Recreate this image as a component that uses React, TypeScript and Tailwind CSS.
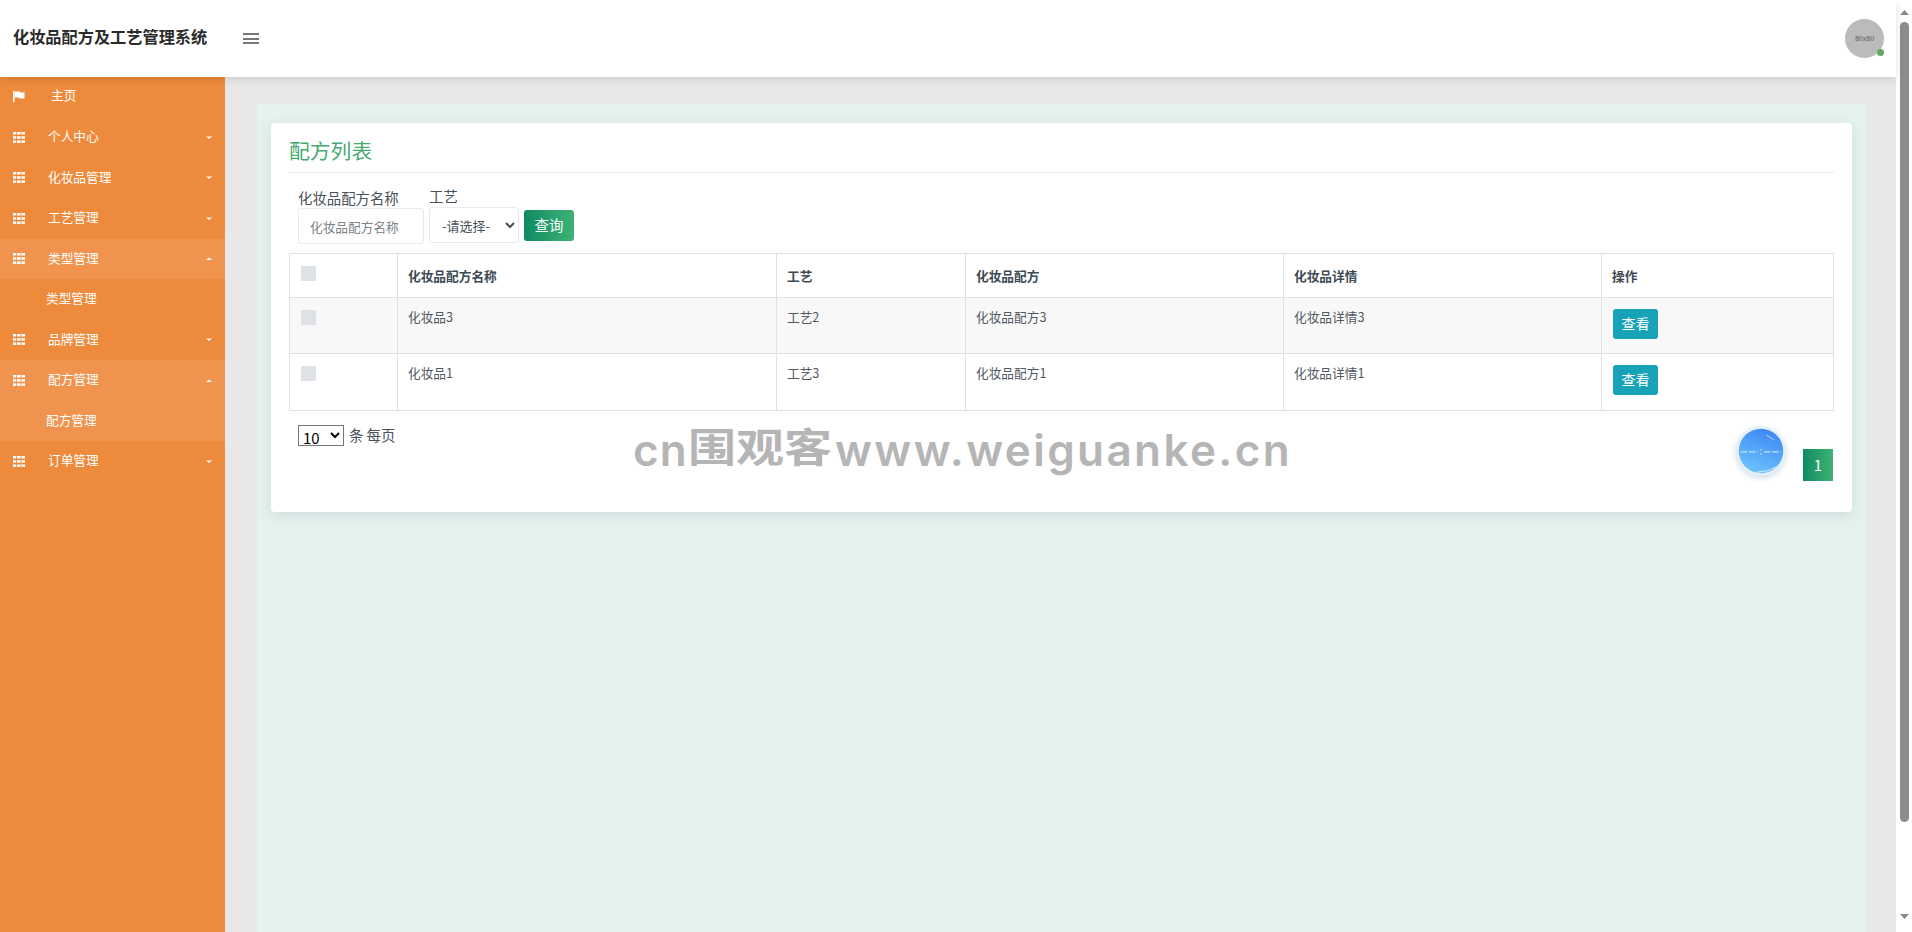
import { useState } from "react";

function GridIcon() {
  return (
    <svg width="12" height="11" viewBox="0 0 12 11" className="shrink-0" fill="#fff">
      {[0, 4.2, 8.4].map((y) => (
        <g key={y}>
          <rect x="0" y={y} width="3" height="2.5" />
          <rect x="3.8" y={y} width="3.8" height="2.5" />
          <rect x="8.4" y={y} width="3.6" height="2.5" />
        </g>
      ))}
    </svg>
  );
}

function FlagIcon() {
  return (
    <svg width="12" height="12" viewBox="0 0 12 12" className="shrink-0" fill="#fff">
      <rect x="0" y="0" width="1.6" height="11" />
      <path d="M1.6 0.5 H7 L7.6 1.6 H11.5 V7.4 H6.4 L5.8 6.4 H1.6 Z" />
    </svg>
  );
}

function Caret({ up }: { up?: boolean }) {
  return (
    <svg width="6" height="3" viewBox="0 0 6 3" fill="#fff" className="shrink-0">
      {up ? <path d="M0 3 L3 0.5 L6 3 Z" /> : <path d="M0 0.5 L6 0.5 L3 3 Z" />}
    </svg>
  );
}

type MenuItem = { label: string; sub?: string };

const menu: MenuItem[] = [
  { label: "个人中心" },
  { label: "化妆品管理" },
  { label: "工艺管理" },
  { label: "类型管理", sub: "类型管理" },
  { label: "品牌管理" },
  { label: "配方管理", sub: "配方管理" },
  { label: "订单管理" },
];

function Sidebar() {
  return (
    <aside className="w-[225px] shrink-0 bg-[#ed8a3b] text-[12.7px] text-white">
      <div className="flex h-[40px] items-center pl-[13px]">
        <FlagIcon />
        <span className="relative -top-[2px] ml-[26px]">主页</span>
      </div>
      {menu.map((item) => (
        <div key={item.label} className={item.label === "配方管理" ? "bg-[#f0934e]" : ""}>
          <div
            className={`flex h-[40.5px] items-center pl-[13px] pr-[13px] ${
              item.label === "类型管理" ? "bg-[#f0934e]" : ""
            }`}
          >
            <GridIcon />
            <span className="relative -top-[1.5px] ml-[23px] flex-1">{item.label}</span>
            <Caret up={!!item.sub} />
          </div>
          {item.sub && <div className="flex h-[40.5px] items-center pb-[3px] pl-[46px]">{item.sub}</div>}
        </div>
      ))}
    </aside>
  );
}

const rows = [
  { name: "化妆品3", craft: "工艺2", formula: "化妆品配方3", detail: "化妆品详情3", h: "h-[56px]" },
  { name: "化妆品1", craft: "工艺3", formula: "化妆品配方1", detail: "化妆品详情1", h: "h-[57px]" },
];

function Checkbox() {
  return <div className="h-[15px] w-[15px] bg-[#dee2e6]" />;
}

function FormulaTable() {
  return (
    <table className="w-[1544px] table-fixed border-collapse text-[12.7px] text-[#50585f]">
      <colgroup>
        <col className="w-[108px]" />
        <col className="w-[379px]" />
        <col className="w-[189px]" />
        <col className="w-[318px]" />
        <col className="w-[318px]" />
        <col className="w-[232px]" />
      </colgroup>
      <thead>
        <tr className="h-[44px] font-bold">
          <th className="border border-[#dee2e6] pl-[11px] pt-[12px] text-left align-top">
            <Checkbox />
          </th>
          {["化妆品配方名称", "工艺", "化妆品配方", "化妆品详情", "操作"].map((h) => (
            <th key={h} className="border border-[#dee2e6] pl-[10px] text-left align-middle text-[#3d4a54]">
              {h}
            </th>
          ))}
        </tr>
      </thead>
      <tbody>
        {rows.map((r, i) => (
          <tr key={r.name} className={`${r.h} ${i === 0 ? "bg-[#f8f8f8]" : "bg-white"}`}>
            <td className="border border-[#dee2e6] pl-[11px] pt-[12px] align-top">
              <Checkbox />
            </td>
            {[r.name, r.craft, r.formula, r.detail].map((v) => (
              <td key={v} className="border border-[#dee2e6] pl-[10px] pt-[9px] align-top leading-[20px]">
                {v}
              </td>
            ))}
            <td className="border border-[#dee2e6] pl-[11px] pt-[11px] align-top">
              <button className="flex h-[30px] w-[45px] items-center justify-center rounded-[3px] bg-[#17a2b8] pb-[2px] text-[14px] text-white">
                查看
              </button>
            </td>
          </tr>
        ))}
      </tbody>
    </table>
  );
}

function FloatingBall() {
  return (
    <svg
      width="50"
      height="50"
      viewBox="0 0 54 54"
      className="absolute left-[1465px] top-[303px] drop-shadow-[0_2px_3px_rgba(120,160,190,0.4)]"
    >
      <defs>
        <linearGradient id="ball" x1="0.7" y1="0" x2="0.3" y2="1">
          <stop offset="0" stopColor="#3f86f5" />
          <stop offset="1" stopColor="#6cc4fb" />
        </linearGradient>
      </defs>
      <circle cx="27" cy="27" r="26.5" fill="#e3f1f8" />
      <circle cx="27" cy="27" r="24" fill="url(#ball)" />
      <path d="M5 28 H24 M30 28 H49" stroke="#bfe3fb" strokeWidth="1.4" strokeDasharray="7 2" />
      <path d="M27 25 V26.5 M27 29.5 V31" stroke="#d5effc" strokeWidth="1.4" />
      <path d="M33 10 L41 15" stroke="#d5effc" strokeWidth="1" strokeDasharray="3 1" />
      <path d="M22 50 Q34 50 44 44" stroke="#d5f3f6" strokeWidth="1" fill="none" />
    </svg>
  );
}

function Card() {
  const [name, setName] = useState("");
  return (
    <section className="relative h-[389px] rounded-[4px] bg-white px-[18px] shadow-[0_4px_14px_rgba(120,150,180,0.22)]">
      <h2 className="flex h-[50px] items-center border-b border-[#e9ecef] pt-[7px] text-[20.8px] font-normal text-[#48aa72]">
        配方列表
      </h2>
      <form className="flex h-[80px] items-start pl-[9px] text-[14.4px] text-[#495057]">
        <label className="mt-[15px] flex w-[131px] flex-col">
          <span className="h-[20px] leading-[20px]">化妆品配方名称</span>
          <input
            value={name}
            onChange={(e) => setName(e.target.value)}
            placeholder="化妆品配方名称"
            className="h-[36px] w-[126px] rounded-[3px] border border-[#e6ebef] pl-[11px] text-[12.7px] outline-none placeholder:text-[#7b8188]"
          />
        </label>
        <label className="mt-[13px] flex w-[95px] flex-col">
          <span className="h-[21px] leading-[20px]">工艺</span>
          <select className="h-[36px] w-[90px] rounded-[3px] border border-[#e6ebef] bg-white pl-[8px] text-[13px]">
            <option>-请选择-</option>
          </select>
        </label>
        <button
          type="button"
          className="mt-[37px] flex h-[31px] w-[50px] items-center justify-center rounded-[3px] bg-gradient-to-r from-[#0c8a62] to-[#3db474] pb-[2px] text-white"
        >
          查询
        </button>
      </form>
      <FormulaTable />
      <div className="flex items-start justify-between">
        <div className="mt-[14px] flex items-center pl-[9px] text-[14.4px] text-[#495057]">
          <select className="h-[21px] w-[46px] rounded-none border border-[#767676] bg-white text-[15px] text-black">
            <option>10</option>
          </select>
          <span className="ml-[5px] -translate-y-[1px]">条 每页</span>
        </div>
        <div className="mr-px mt-[38px] flex h-[32px] w-[30px] items-center justify-center bg-gradient-to-r from-[#0c8a62] to-[#3db474] text-[15px] text-white">
          1
        </div>
      </div>
      <FloatingBall />
    </section>
  );
}

function Scrollbar() {
  return (
    <div className="flex w-[16px] shrink-0 flex-col items-center bg-white">
      <svg width="9" height="5" viewBox="0 0 9 5" fill="#8a8a8a" className="mt-[10px] shrink-0">
        <path d="M4.5 0 L9 5 H0 Z" />
      </svg>
      <div className="mt-[7px] h-[800px] w-[9px] rounded-[5px] bg-[#8c8c8c]" />
      <div className="flex-1" />
      <svg width="9" height="5" viewBox="0 0 9 5" fill="#8a8a8a" className="mb-[13px] shrink-0">
        <path d="M0 0 H9 L4.5 5 Z" />
      </svg>
    </div>
  );
}

export default function App() {
  return (
    <div
      className="relative flex h-[932px] w-[1912px] overflow-hidden bg-white"
      style={{ fontFamily: '"Noto Sans CJK SC", "Liberation Sans", sans-serif' }}
    >
      <div className="flex w-[1896px] flex-col">
        <header className="relative z-10 flex h-[77px] shrink-0 items-center bg-white pl-[13px] pr-[12px] shadow-[0_2px_8px_rgba(0,0,0,0.12)]">
          <h1 className="-translate-y-[2px] text-[16.2px] font-bold text-[#2b2b2b]">化妆品配方及工艺管理系统</h1>
          <button className="ml-[36px] flex w-[16px] flex-col gap-[2.5px]">
            <span className="h-[2px] bg-[#777]" />
            <span className="h-[2px] bg-[#777]" />
            <span className="h-[2px] bg-[#777]" />
          </button>
          <div className="relative ml-auto flex h-[39px] w-[39px] items-center justify-center rounded-full bg-[#bbbbbb] text-[7px] text-[#555]">
            80x80
            <span className="absolute bottom-[2px] right-0 h-[7px] w-[7px] rounded-full bg-[#62a862]" />
          </div>
        </header>
        <div className="flex min-h-0 flex-1">
          <Sidebar />
          <main className="min-w-0 flex-1 bg-[#e8e8e8] pl-[32px] pr-[30px] pt-[27px]">
            <div className="h-full bg-[#e6f3ec] px-[14px] pt-[19px]">
              <Card />
            </div>
          </main>
        </div>
      </div>
      <Scrollbar />
      <div
        className="pointer-events-none absolute left-[633px] top-[420px] z-20 flex items-baseline whitespace-nowrap text-[#b5b5b5]"
        style={{ fontFamily: 'Inter, "Noto Sans CJK SC", sans-serif' }}
      >
        <span className="w-[55px] text-[44px] font-semibold leading-[60px] tracking-[1px]">cn</span>
        <span className="w-[147px] origin-left -translate-y-[4px] scale-x-[1.2] text-[40px] font-bold leading-[60px]">
          围观客
        </span>
        <span className="text-[44px] font-semibold leading-[60px] tracking-[2.4px]">www.weiguanke.cn</span>
      </div>
    </div>
  );
}
